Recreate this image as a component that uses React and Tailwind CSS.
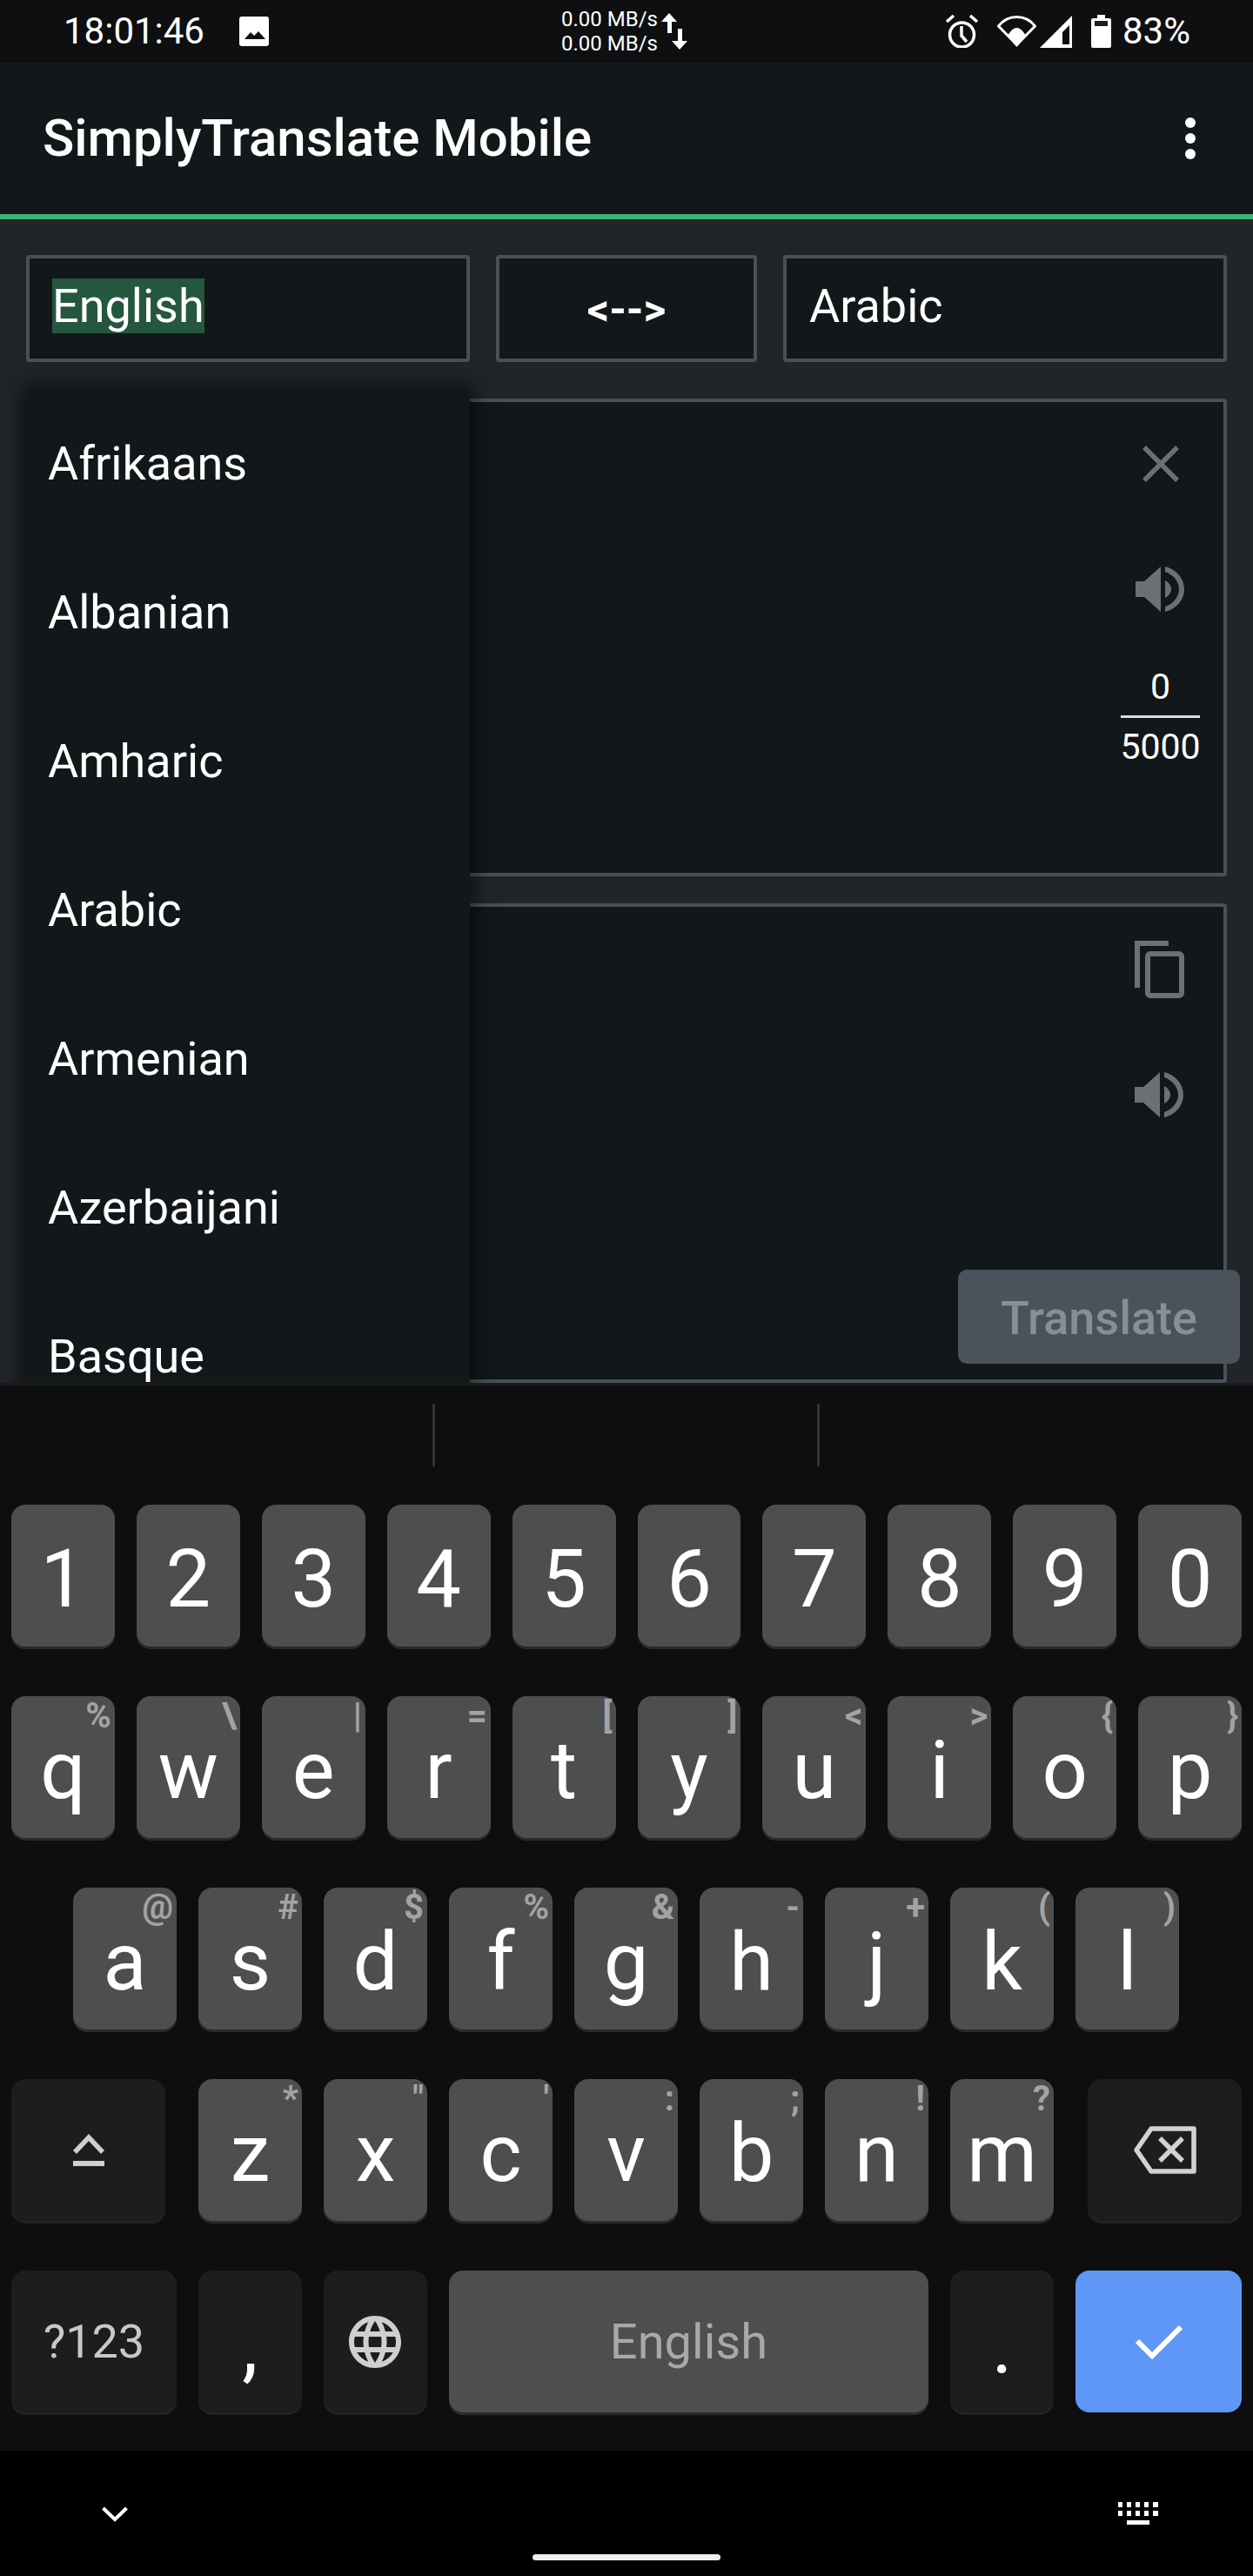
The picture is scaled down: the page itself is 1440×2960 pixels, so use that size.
const languages = ["Afrikaans", "Albanian", "Amharic", "Arabic", "Armenian", "Azerbaijani", "Basque"];

const row2 = [["q", "%"], ["w", "\\"], ["e", "|"], ["r", "="], ["t", "["], ["y", "]"], ["u", "<"], ["i", ">"], ["o", "{"], ["p", "}"]];
const row3 = [["a", "@"], ["s", "#"], ["d", "$"], ["f", "%"], ["g", "&"], ["h", "-"], ["j", "+"], ["k", "("], ["l", ")"]];
const row4 = [["z", "*"], ["x", '"'], ["c", "'"], ["v", ":"], ["b", ";"], ["n", "!"], ["m", "?"]];

const Key = ({ label, hint }) => (
  <div className="relative flex h-[163px] w-[119px] items-center justify-center rounded-[16px] bg-[#4e4e4e] pt-2 text-[92px] leading-none text-white shadow-[0_3px_0_#2a2a2a]">
    {label}
    {hint && (
      <span className="absolute right-[4px] top-[3px] text-[40px] font-bold leading-none text-[#a3a3a3]">
        {hint}
      </span>
    )}
  </div>
);

const DarkKey = ({ className, children }) => (
  <div className={`flex h-[163px] items-center justify-center rounded-[16px] bg-[#1d1d1d] shadow-[0_3px_0_#222222] ${className}`}>
    {children}
  </div>
);

const Speaker = () => (
  <svg width="57" height="52" viewBox="0 0 57 52" fill="#6d7072">
    <path d="M0 17h10L29 0v52L10 35H0z" />
    <path d="M34 16c4 2 7 6 7 10s-3 8-7 10z" />
    <path d="M34 0c13 3 22 14 22 26s-9 23-22 26v-6c9-3 16-11 16-20S43 9 34 6z" />
  </svg>
);

const StatusBar = () => (
  <div className="flex h-[72px] items-center bg-[#0e0f11] text-white">
    <span className="ml-[73px] w-[164px] text-[42px] leading-none">18:01:46</span>
    <svg className="ml-[38px]" width="34" height="34" viewBox="0 0 34 34">
      <rect width="34" height="34" rx="3" fill="#fff" />
      <path d="M6 26l7-8 4 4 5-5 8 9z" fill="#0e0f11" />
    </svg>
    <div className="ml-[336px] w-[108px] whitespace-nowrap text-[24px] leading-[28px]">
      <div>0.00 MB/s</div>
      <div>0.00 MB/s</div>
    </div>
    <svg className="ml-[7px]" width="30" height="42" viewBox="0 0 30 42" fill="#fff">
      <path d="M9 0l9 10h-6v13H7V10H0z" />
      <path d="M19 18h5v14h6l-9 10-9-10h7z" />
    </svg>
    <svg className="ml-[297px]" width="37" height="38" viewBox="0 0 37 38" fill="none" stroke="#fff" strokeWidth="3.500">
      <circle cx="18.500" cy="23" r="14" />
      <path d="M18 13v11l6 7" />
      <path d="M1 8l8-7M36 8l-8-7" />
    </svg>
    <svg className="ml-[22px]" width="45" height="36" viewBox="0 0 45 36">
      <path d="M1.500 12C7 5 14 1.500 22.500 1.500S38 5 43.500 12L22.500 33.500z" fill="none" stroke="#fff" strokeWidth="3" strokeLinejoin="round" />
      <path d="M12 23Q22.500 5 33 23L22.500 36z" fill="#fff" />
    </svg>
    <svg className="ml-[4px]" width="37" height="37" viewBox="0 0 37 37">
      <path d="M0 37L37 0V37zM26 19L34 11V33H26z" fill="#fff" fillRule="evenodd" />
    </svg>
    <svg className="ml-[22px]" width="23" height="38" viewBox="0 0 23 38">
      <path d="M7 0h9v4h5a2 2 0 012 2v30a2 2 0 01-2 2H2a2 2 0 01-2-2V6a2 2 0 012-2h5z" fill="#fff" />
      <rect x="4" y="7" width="15" height="6" fill="#1c1d1f" />
    </svg>
    <span className="ml-[13px] text-[42px] leading-none">83%</span>
  </div>
);

const LangBox = ({ children }) => (
  <div className="flex h-[123px] w-[510px] items-center rounded-[4px] border-4 border-[#495057] bg-[#12171a] pb-[6px] pl-[26px] text-[54px] leading-[63px] text-white">
    {children}
  </div>
);

const Keyboard = () => (
  <div className="flex h-[1227px] flex-col border-t-[3px] border-[#1a1b1d] bg-[#0e0e0e]">
    <div className="flex h-[137px] items-start pt-[21px]">
      <div className="ml-[497px] h-[72px] w-[3px] bg-[#333333]" />
      <div className="ml-[439px] h-[72px] w-[3px] bg-[#333333]" />
    </div>
    <div className="flex flex-col gap-[57px] px-[13px]">
      <div className="flex gap-[25px]">
        {["1", "2", "3", "4", "5", "6", "7", "8", "9", "0"].map((d) => (
          <Key key={d} label={d} />
        ))}
      </div>
      <div className="flex gap-[25px]">
        {row2.map(([l, h]) => (
          <Key key={l} label={l} hint={h} />
        ))}
      </div>
      <div className="flex gap-[25px] pl-[71px]">
        {row3.map(([l, h]) => (
          <Key key={l} label={l} hint={h} />
        ))}
      </div>
      <div className="flex gap-[25px]">
        <DarkKey className="mr-[13px] w-[177px]">
          <svg width="36" height="37" viewBox="0 0 36 37" fill="none" stroke="#cfcfcf">
            <path d="M2 21L18 4l16 17" strokeWidth="5.500" />
            <path d="M0 34h36" strokeWidth="6" />
          </svg>
        </DarkKey>
        {row4.map(([l, h]) => (
          <Key key={l} label={l} hint={h} />
        ))}
        <DarkKey className="ml-[14px] w-[177px]">
          <svg width="72" height="55" viewBox="0 0 72 55" fill="none" stroke="#d2d2d2" strokeWidth="5.500">
            <path d="M20 3h49v49H20L3 27.500z" strokeLinejoin="round" />
            <path d="M30 14l26 26M56 14L30 40" />
          </svg>
        </DarkKey>
      </div>
      <div className="flex gap-[25px]">
        <DarkKey className="w-[190px] text-[54px] text-[#c8c8c8]">?123</DarkKey>
        <DarkKey className="w-[119px] pt-2 text-[92px] leading-none text-white">,</DarkKey>
        <DarkKey className="w-[119px]">
          <svg width="60" height="60" viewBox="2 2 20 20" fill="#cfcfcf">
            <path d="M11.99 2C6.47 2 2 6.48 2 12s4.470 10 9.990 10C17.520 22 22 17.520 22 12S17.520 2 11.990 2zm6.930 6h-2.950c-.320-1.250-.780-2.450-1.380-3.560 1.840.630 3.370 1.910 4.330 3.560zM12 4.040c.830 1.200 1.480 2.530 1.910 3.960h-3.820c.430-1.430 1.080-2.760 1.910-3.960zM4.260 14C4.100 13.360 4 12.690 4 12s.100-1.360.260-2h3.380c-.080.660-.140 1.320-.140 2 0 .680.060 1.340.140 2H4.260zm.820 2h2.950c.320 1.250.780 2.450 1.380 3.560-1.840-.630-3.370-1.900-4.330-3.560zm2.950-8H5.080c.960-1.660 2.490-2.930 4.330-3.560C8.810 5.550 8.350 6.750 8.030 8zM12 19.960c-.830-1.200-1.480-2.530-1.910-3.960h3.820c-.430 1.430-1.080 2.760-1.910 3.960zM14.340 14H9.660c-.090-.660-.160-1.320-.160-2 0-.680.070-1.350.160-2h4.680c.090.650.160 1.320.160 2 0 .680-.070 1.340-.160 2zm.250 5.560c.600-1.110 1.060-2.310 1.380-3.560h2.950c-.960 1.650-2.490 2.930-4.330 3.560zM16.360 14c.080-.660.140-1.320.140-2 0-.680-.060-1.340-.140-2h3.380c.160.640.260 1.310.260 2s-.100 1.360-.260 2h-3.380z" />
          </svg>
        </DarkKey>
        <div className="flex h-[163px] w-[552px] items-center justify-center rounded-[16px] bg-[#4e4e4e] text-[56px] text-[#a8a8a8] shadow-[0_3px_0_#2a2a2a]">
          English
        </div>
        <DarkKey className="w-[119px] pt-2 text-[92px] leading-none text-white">.</DarkKey>
        <div className="flex h-[163px] w-[191px] items-center justify-center rounded-[16px] bg-[#5e97f6]">
          <svg width="54" height="40" viewBox="0 0 54 40" fill="none" stroke="#fff" strokeWidth="6">
            <path d="M2 19l17 17L52 3" />
          </svg>
        </div>
      </div>
    </div>
  </div>
);

const NavBar = () => (
  <div className="flex h-[144px] items-start bg-black">
    <svg className="ml-[117px] mt-[64px]" width="30" height="18" viewBox="0 0 30 18" fill="none" stroke="#fff" strokeWidth="4">
      <path d="M1.500 2L15 15 28.500 2" />
    </svg>
    <div className="ml-[465px] mt-[119px] h-[7px] w-[216px] rounded-full bg-[#eeeeee]" />
    <svg className="ml-[457px] mt-[59px]" width="46" height="26" viewBox="0 0 46 26" fill="#fff">
      <path d="M0 0h5v6H0zM10 0h5v6h-5zM20 0h5v6h-5zM30 0h5v6h-5zM40 0h6v6h-6zM0 10h5v6H0zM10 10h5v6h-5zM20 10h5v6h-5zM30 10h5v6h-5zM40 10h6v6h-6zM10 21h26v5H10z" />
    </svg>
  </div>
);

export default function App() {
  return (
    <div className="flex h-[2960px] w-[1440px] flex-col overflow-hidden bg-[#212529] font-[Roboto,sans-serif]">
      <StatusBar />
      <div className="flex h-[180px] items-center justify-between border-b-[6px] border-[#3cb371] bg-[#12171a] pl-[49px] pr-[66px] text-white">
        <h1 className="text-[60px] font-medium">SimplyTranslate Mobile</h1>
        <div className="flex flex-col gap-[6px]">
          <div className="h-[12px] w-[12px] rounded-full bg-white" />
          <div className="h-[12px] w-[12px] rounded-full bg-white" />
          <div className="h-[12px] w-[12px] rounded-full bg-white" />
        </div>
      </div>

      <div className="relative h-[1337px] overflow-hidden px-[30px] pt-[41px]">
        <div className="flex gap-[30px]">
          <LangBox>
            <span className="bg-[#25563e]">English</span>
          </LangBox>
          <div className="flex h-[123px] w-[300px] items-center justify-center rounded-[4px] border-4 border-[#495057] bg-[#12171a] pt-[4px] text-[50px] font-bold text-white">
            {"<-->"}
          </div>
          <LangBox>Arabic</LangBox>
        </div>

        <div className="mt-[42px] flex h-[549px] justify-end rounded-[4px] border-4 border-[#495057] bg-[#12171a] pr-[27px]">
          <div className="flex w-[91px] flex-col items-center pt-[50px] text-[41px] leading-[47px] text-white">
            <svg width="42" height="42" viewBox="0 0 42 42" stroke="#6d7072" strokeWidth="5.500">
              <path d="M2 2l38 38M40 2L2 40" />
            </svg>
            <div className="mt-[97px]">
              <Speaker />
            </div>
            <div className="mt-[63px]">0</div>
            <div className="mt-[9px] h-[3px] w-full bg-[#dddddd]" />
            <div className="mt-[10px]">5000</div>
          </div>
        </div>

        <div className="mt-[31px] flex h-[551px] justify-end rounded-[4px] border-4 border-[#495057] bg-[#12171a] pr-[45px]">
          <div className="flex flex-col items-center pt-[39px]">
            <svg width="57" height="66" viewBox="0 0 57 66" fill="none" stroke="#6d7072" strokeWidth="6">
              <path d="M3 54V3h36" />
              <rect x="15" y="15" width="39" height="48" rx="3" />
            </svg>
            <div className="mt-[85px]">
              <Speaker />
            </div>
          </div>
        </div>

        <div className="absolute bottom-[22px] left-[1101px] flex h-[108px] w-[324px] items-center justify-center rounded-[10px] bg-[#4a535b] pt-[2px] text-[54px] font-medium text-[#868e96]">
          Translate
        </div>

        {/* language dropdown, runs under the keyboard */}
        <div className="absolute left-[30px] top-[194px] w-[510px] bg-[#12171a] pb-[300px] pl-[25px] pt-[1px] text-[54px] text-white shadow-[0_0_22px_6px_rgba(0,0,0,0.5)]">
          {languages.map((lang) => (
            <div key={lang} className="flex h-[171px] items-center">
              {lang}
            </div>
          ))}
        </div>
      </div>

      <Keyboard />
      <NavBar />
    </div>
  );
}
